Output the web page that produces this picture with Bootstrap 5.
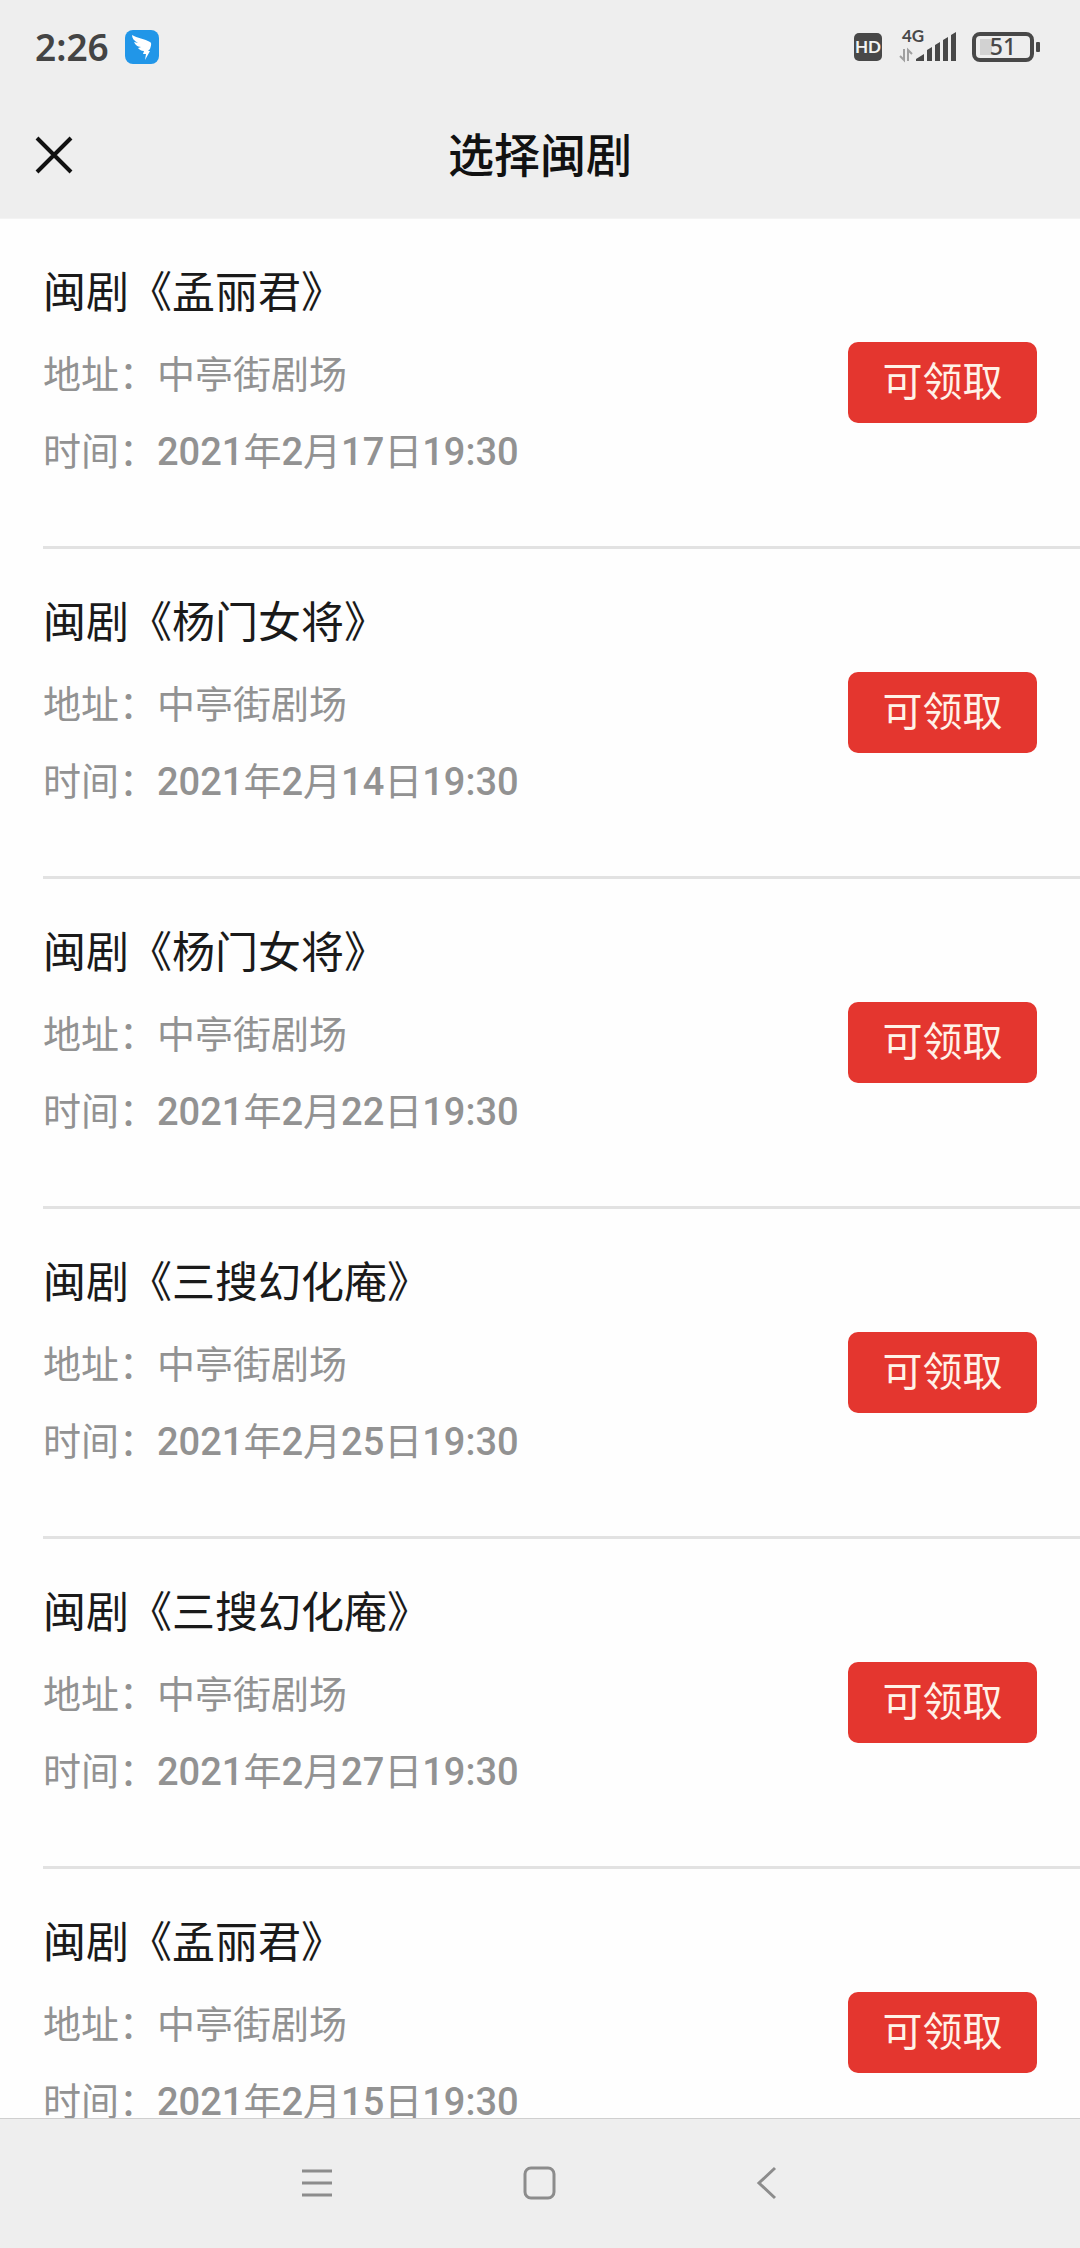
<!DOCTYPE html>
<html lang="zh-CN">
<head>
<meta charset="utf-8">
<meta name="viewport" content="width=device-width, initial-scale=1">
<title>选择闽剧</title>
<link href="https://cdn.jsdelivr.net/npm/bootstrap@5.3.0/dist/css/bootstrap.min.css" rel="stylesheet">
<style>
  body { font-family: Roboto, "Noto Sans CJK SC", sans-serif; background: #fefefe; color: #1a1a1a; }
  .app-head { background: #eeeeee; border-bottom: 1px solid #f3f3f3; }
  .status-bar { height: 94px; padding: 0 40px 0 35px; }
  .clock { font: 600 37px/48px "Noto Sans", sans-serif; color: #444; }
  .title-bar { display: grid; grid-template-columns: 1fr auto 1fr; height: 124px; padding: 0 35px; }
  .title-bar h1 { font-size: 46px; line-height: 60px; font-weight: 500; color: #111; }
  .icon-btn { background: none; border: 0; padding: 0; line-height: 0; }
  .show-item { margin-left: 43px; padding: 44px 43px 0 0; height: 330px; border-bottom: 3px solid #e2e2e2; }
  .show-name { font-size: 43px; line-height: 60px; font-weight: 400; margin-bottom: 14px; }
  .show-info { font-size: 38px; line-height: 77px; color: #929292; }
  .show-info time span { font-weight: 500; }
  .claim { width: 189px; height: 81px; margin-top: 79px; padding: 0; border: 0; border-radius: 10px; font-size: 40px; line-height: 77px;
    --bs-btn-color: #fff2e8; --bs-btn-bg: #e4362f; --bs-btn-hover-bg: #cc2d27; --bs-btn-hover-color: #fff; }
  .sys-nav { height: 130px; background: #eeeeee; border-top: 1px solid #cfcfcf; }
  .sys-nav .icon-btn { width: 21%; height: 100%; }
</style>
</head>
<body>
<div class="d-flex flex-column vh-100 overflow-hidden">
  <header class="app-head flex-shrink-0">
    <div class="status-bar d-flex align-items-center justify-content-between">
      <div class="d-flex align-items-center">
        <span class="clock">2:26</span>
        <svg class="ms-3" width="34" height="34" viewBox="0 0 34 34" aria-hidden="true">
          <rect width="34" height="34" rx="8" fill="#2196e8"/>
          <path d="M7 5C12 8 20 9 25 12C27 13 26 16 25 19L23 21H25L20 30L21 24H18L19 21C16 21 14 19 13 18L16 17C12 17 10 14 9 12L13 13C9 11 7 8 7 5Z" fill="#fff"/>
        </svg>
      </div>
      <svg width="188" height="48" viewBox="0 -6 188 48" font-family="Lato, sans-serif" font-weight="700" fill="#484848" role="img" aria-label="HD 4G 51%">
        <rect x="2" y="4" width="28" height="28" rx="5"/>
        <text x="16" y="24" font-size="17" text-anchor="middle" fill="#f4f4f4">HD</text>
        <text x="50" y="13" font-size="17" text-anchor="start">4G</text>
        <path d="M52 20V31L48 27M56 32V21L60 25" fill="none" stroke="#a0a0a0" stroke-width="2"/>
        <path d="M64 32V30L72 25V32ZM75 21L80 18V32H75ZM83 16L88 13V32H83ZM91 11L96 8V32H91ZM99 6L104 3V32H99Z"/>
        <rect x="122" y="5" width="58" height="26" rx="6" fill="none" stroke="#484848" stroke-width="4"/>
        <rect x="128" y="10" width="12" height="16" fill="#d2d2d2"/>
        <rect x="184" y="13" width="4" height="10" rx="1"/>
        <text x="151" y="26" font-family="Noto Sans, sans-serif" font-size="23" font-weight="500" text-anchor="middle">51</text>
      </svg>
    </div>
    <div class="title-bar align-items-center">
      <button class="icon-btn text-start" type="button" aria-label="关闭">
        <svg width="38" height="40" viewBox="0 0 38 40"><path d="M2 2L36 36M36 2L2 36" stroke="#111" stroke-width="4"/></svg>
      </button>
      <h1 class="m-0">选择闽剧</h1>
    </div>
  </header>

  <main class="flex-grow-1 overflow-hidden">
    <ul class="list-unstyled m-0">
      <li class="show-item d-flex justify-content-between align-items-start">
        <div><h2 class="show-name">闽剧《孟丽君》</h2>
          <div class="show-info">地址：中亭街剧场</div>
          <div class="show-info">时间：<time datetime="2021-02-17T19:30"><span>2021</span>年<span>2</span>月<span>17</span>日<span>19:30</span></time></div></div>
        <button class="btn claim" type="button">可领取</button>
      </li>
      <li class="show-item d-flex justify-content-between align-items-start">
        <div><h2 class="show-name">闽剧《杨门女将》</h2>
          <div class="show-info">地址：中亭街剧场</div>
          <div class="show-info">时间：<time datetime="2021-02-14T19:30"><span>2021</span>年<span>2</span>月<span>14</span>日<span>19:30</span></time></div></div>
        <button class="btn claim" type="button">可领取</button>
      </li>
      <li class="show-item d-flex justify-content-between align-items-start">
        <div><h2 class="show-name">闽剧《杨门女将》</h2>
          <div class="show-info">地址：中亭街剧场</div>
          <div class="show-info">时间：<time datetime="2021-02-22T19:30"><span>2021</span>年<span>2</span>月<span>22</span>日<span>19:30</span></time></div></div>
        <button class="btn claim" type="button">可领取</button>
      </li>
      <li class="show-item d-flex justify-content-between align-items-start">
        <div><h2 class="show-name">闽剧《三搜幻化庵》</h2>
          <div class="show-info">地址：中亭街剧场</div>
          <div class="show-info">时间：<time datetime="2021-02-25T19:30"><span>2021</span>年<span>2</span>月<span>25</span>日<span>19:30</span></time></div></div>
        <button class="btn claim" type="button">可领取</button>
      </li>
      <li class="show-item d-flex justify-content-between align-items-start">
        <div><h2 class="show-name">闽剧《三搜幻化庵》</h2>
          <div class="show-info">地址：中亭街剧场</div>
          <div class="show-info">时间：<time datetime="2021-02-27T19:30"><span>2021</span>年<span>2</span>月<span>27</span>日<span>19:30</span></time></div></div>
        <button class="btn claim" type="button">可领取</button>
      </li>
      <li class="show-item d-flex justify-content-between align-items-start">
        <div><h2 class="show-name">闽剧《孟丽君》</h2>
          <div class="show-info">地址：中亭街剧场</div>
          <div class="show-info">时间：<time datetime="2021-02-15T19:30"><span>2021</span>年<span>2</span>月<span>15</span>日<span>19:30</span></time></div></div>
        <button class="btn claim" type="button">可领取</button>
      </li>
    </ul>
  </main>

  <nav class="sys-nav d-flex justify-content-center flex-shrink-0" aria-label="系统导航">
    <button class="icon-btn" type="button" aria-label="最近任务">
      <svg width="40" height="40" viewBox="0 0 40 40"><path d="M9 7H39M9 19H39M9 31H39" stroke="#8c8c8c" stroke-width="3"/></svg>
    </button>
    <button class="icon-btn" type="button" aria-label="主屏幕">
      <svg width="40" height="40" viewBox="0 0 40 40"><rect x="5" y="4" width="29" height="30" rx="6" fill="none" stroke="#8c8c8c" stroke-width="3"/></svg>
    </button>
    <button class="icon-btn" type="button" aria-label="返回">
      <svg width="40" height="40" viewBox="0 0 40 40"><path d="M28 4L12 19L28 34" fill="none" stroke="#8c8c8c" stroke-width="3"/></svg>
    </button>
  </nav>
</div>
<script src="https://cdn.jsdelivr.net/npm/bootstrap@5.3.0/dist/js/bootstrap.bundle.min.js"></script>
</body>
</html>
